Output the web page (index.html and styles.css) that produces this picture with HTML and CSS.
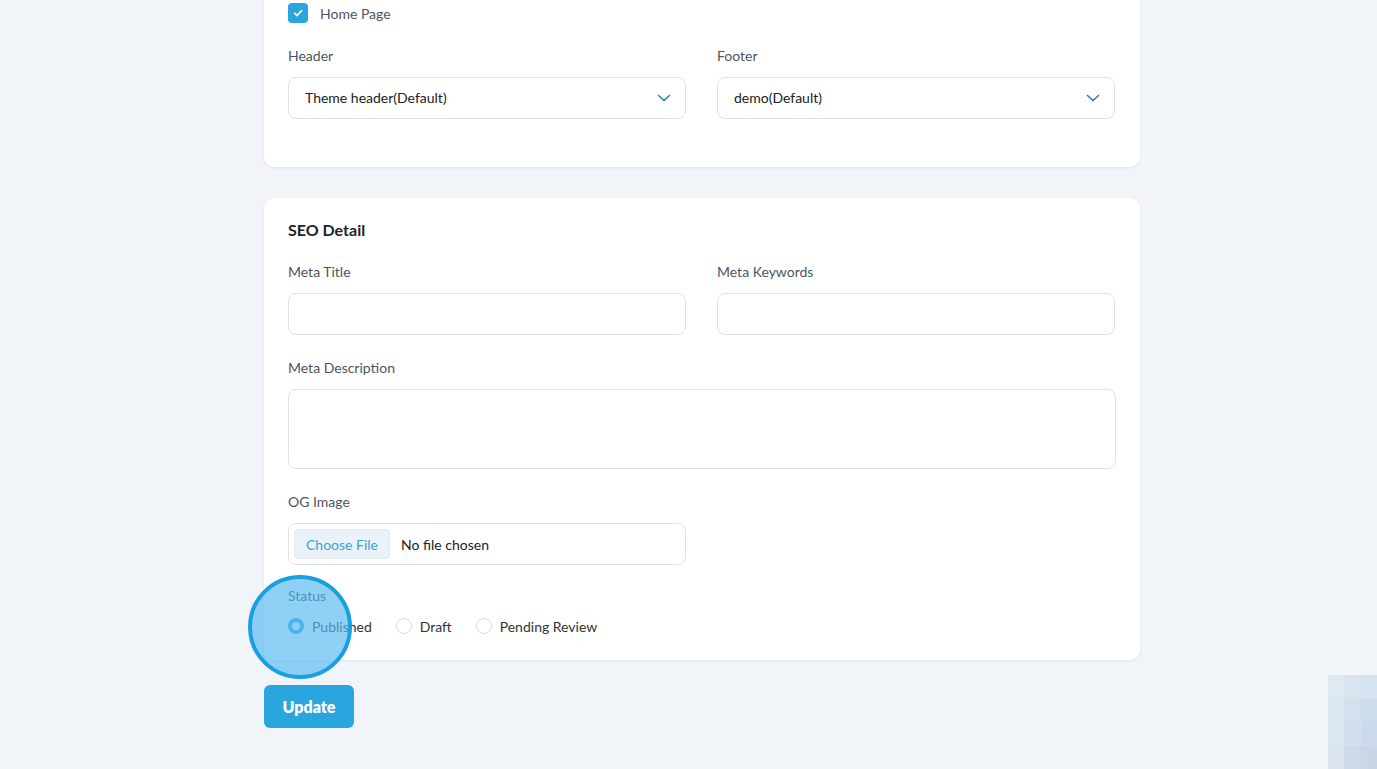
FILE: index.html
```html
<!DOCTYPE html>
<html>
<head>
<meta charset="utf-8">
<link rel="stylesheet" href="styles.css">
</head>
<body>
<div class="page">
  <section class="card card-top">
    <label class="check-row">
      <span class="checkbox"><svg width="12" height="12" viewBox="0 0 12 12"><path d="M2.5 6.2 L5 8.6 L9.6 3.6" fill="none" stroke="#fff" stroke-width="1.6" stroke-linecap="round" stroke-linejoin="round"/></svg></span>
      <span class="check-label">Home Page</span>
    </label>
    <div class="grid2">
      <div class="field">
        <div class="label">Header</div>
        <div class="control select"><span>Theme header(Default)</span>
          <svg class="chev" width="14" height="8" viewBox="0 0 14 8"><path d="M1.5 1.5 L7 6.5 L12.5 1.5" fill="none" stroke="#2c7fb3" stroke-width="1.6" stroke-linecap="round" stroke-linejoin="round"/></svg></div>
      </div>
      <div class="field">
        <div class="label">Footer</div>
        <div class="control select"><span>demo(Default)</span>
          <svg class="chev" width="14" height="8" viewBox="0 0 14 8"><path d="M1.5 1.5 L7 6.5 L12.5 1.5" fill="none" stroke="#2c7fb3" stroke-width="1.6" stroke-linecap="round" stroke-linejoin="round"/></svg></div>
      </div>
    </div>
  </section>

  <section class="card card-seo">
    <h2 class="title">SEO Detail</h2>
    <div class="grid2">
      <div class="field">
        <div class="label">Meta Title</div>
        <div class="control"></div>
      </div>
      <div class="field">
        <div class="label">Meta Keywords</div>
        <div class="control"></div>
      </div>
    </div>
    <div class="field">
      <div class="label">Meta Description</div>
      <div class="control textarea"></div>
    </div>
    <div class="grid2">
      <div class="field last">
        <div class="label">OG Image</div>
        <div class="control file"><span class="file-btn">Choose File</span><span class="file-text">No file chosen</span></div>
      </div>
    </div>
    <div class="status">
      <div class="label strong">Status</div>
      <div class="radios">
        <span class="radio-item"><span class="radio on"></span>Published</span>
        <span class="radio-item"><span class="radio"></span>Draft</span>
        <span class="radio-item"><span class="radio"></span>Pending Review</span>
      </div>
      <span class="click-ring"></span>
    </div>
  </section>

  <button class="update">Update</button>
</div>
<div class="pixel-blob">
  <span></span><span></span><span></span><span></span><span></span><span></span>
  <span></span><span></span><span></span><span></span><span></span><span></span>
</div>
</body>
</html>
```

FILE: styles.css
```css
html, body { margin: 0; padding: 0; }
body {
  background: #f1f5f9;
  font-family: "Lato", "Open Sans", sans-serif;
  color: #222;
  width: 1377px;
  height: 769px;
  overflow: hidden;
  position: relative;
}
.page {
  margin-left: 264px;
  width: 876px;
  margin-top: -40px;
}
.card {
  background: #fff;
  border-radius: 10px;
  box-shadow: 0 1px 3px rgba(30, 50, 80, 0.08);
  padding: 24px;
  box-sizing: border-box;
}
.card-top { padding-top: 43px; padding-bottom: 48px; }
.card-seo { margin-top: 31px; padding-top: 20px; padding-bottom: 24px; }
.check-row { display: flex; align-items: center; gap: 12px; height: 20px; }
.checkbox {
  width: 20px; height: 20px; border-radius: 4px; background: #2aa5df;
  display: flex; align-items: center; justify-content: center;
}
.check-label { font-size: 14px; color: #4b5560; }
.grid2 { display: grid; grid-template-columns: 398px 398px; column-gap: 31px; }
.card-top .grid2 { margin-top: 23px; }
.field { display: flex; flex-direction: column; }
.label { font-size: 14px; color: #4b5560; height: 20px; line-height: 20px; margin-bottom: 11px; }
.label.strong { color: #2f3a44; }
.control {
  height: 42px; box-sizing: border-box; border: 1px solid #dde2e7; border-radius: 8px;
  background: #fff; display: flex; align-items: center; padding: 0 16px 1px;
  font-size: 14px; color: #222;
}
.select { justify-content: space-between; }
.chev { margin-right: -2px; }
.title { margin: 0; font-size: 16px; font-weight: 700; color: #1e2329; height: 24px; line-height: 24px; }
.card-seo .title + .grid2 { margin-top: 20px; }
.card-seo .field { margin-bottom: 23px; }
.card-seo .field.last { margin-bottom: 21px; }
.textarea { height: 80px; }
.file { padding: 0 5px; gap: 11px; }
.file-btn {
  height: 30px; width: 96px; box-sizing: border-box; border: 1px solid #e1e8ee; border-radius: 4px;
  background: #eaf3f9; color: #3aa4cf; display: flex; align-items: center; justify-content: center;
  font-size: 14px;
}
.file-text { font-size: 14px; color: #222; }
.status { position: relative; }
.status .label { margin-bottom: 10px; }
.radios { display: flex; align-items: center; gap: 24px; font-size: 14px; color: #333; height: 20px; }
.radio-item { display: flex; align-items: center; gap: 8px; }
.radio {
  width: 16px; height: 16px; border-radius: 50%; border: 1px solid #d8dde2; box-sizing: border-box; background: #fff;
}
.radio.on { border: 4px solid #2aa5df; }
.click-ring {
  position: absolute; left: -40px; top: -11px; width: 104px; height: 104px; border-radius: 50%;
  box-sizing: border-box; border: 4px solid #1a9fe0; background: rgba(90, 185, 240, 0.68);
}
.update {
  margin-top: 25px; width: 90px; height: 43px; border: none; border-radius: 6px;
  background: #2aa6df; color: #fff; font-family: "Lato", sans-serif; font-weight: 800; font-size: 16px;
  padding: 0;
}
.pixel-blob {
  position: absolute; left: 1328px; top: 675px; width: 49px; height: 94px;
  display: grid; grid-template-columns: repeat(3, 1fr); grid-template-rows: repeat(4, 1fr);
  opacity: 0.9;
}
.pixel-blob span:nth-child(1) { background: #dde8f2; }
.pixel-blob span:nth-child(2) { background: #d6e3ef; }
.pixel-blob span:nth-child(3) { background: #d2e0ee; }
.pixel-blob span:nth-child(4) { background: #dbe6f1; }
.pixel-blob span:nth-child(5) { background: #d0deec; }
.pixel-blob span:nth-child(6) { background: #cbdbea; }
.pixel-blob span:nth-child(7) { background: #dae5f0; }
.pixel-blob span:nth-child(8) { background: #cfdded; }
.pixel-blob span:nth-child(9) { background: #c9d9ea; }
.pixel-blob span:nth-child(10) { background: #d8e2ed; }
.pixel-blob span:nth-child(11) { background: #cbd8e7; }
.pixel-blob span:nth-child(12) { background: #c4d3e5; }
```
